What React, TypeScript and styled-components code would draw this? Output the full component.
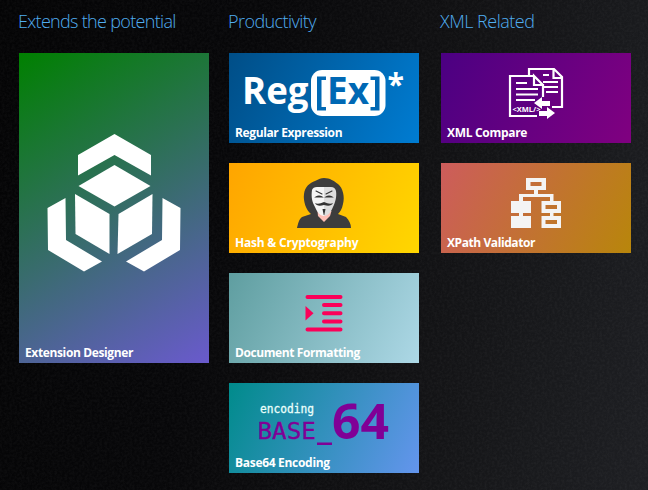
import React from "react";
import styled, { createGlobalStyle } from "styled-components";

const GlobalStyle = createGlobalStyle`
  * { box-sizing: border-box; }
  body { margin: 0; background: #0b0b0c; overflow: hidden; }
`;

const Page = styled.main`
  position: relative;
  isolation: isolate;
  width: 648px;
  height: 490px;
  padding: 8px 0 0 19px;
  overflow: hidden;
  background: linear-gradient(102deg, #050506 0%, #08080a 35%, #111113 60%, #1a1b1e 85%, #1f2024 100%);
  font-family: "Open Sans", "Noto Sans", sans-serif;
`;

const Grain = styled.svg`
  position: absolute;
  inset: 0;
  z-index: -1;
  opacity: 0.024;
`;

const Groups = styled.div`
  display: grid;
  grid-template-columns: 190px 190px 190px;
  column-gap: 20px;
`;

const Group = styled.section<{ $shift?: number }>`
  display: flex;
  flex-direction: column;
  gap: 20px;
  margin-left: ${(p) => p.$shift ?? 0}px;
  margin-right: ${(p) => -(p.$shift ?? 0)}px;
`;

const Heading = styled.h2<{ $tracking: number }>`
  margin: 0 0 0 -1px;
  height: 25px;
  line-height: 27px;
  font-size: 18px;
  font-weight: 300;
  letter-spacing: ${(p) => p.$tracking}px;
  color: #50adf0;
  white-space: nowrap;
`;

const Tile = styled.article<{ $from: string; $to: string; $tall?: boolean }>`
  display: grid;
  grid-template: 1fr / 1fr;
  height: ${(p) => (p.$tall ? 310 : 90)}px;
  background: linear-gradient(
    ${(p) => (p.$tall ? 148.5 : 115.35)}deg,
    ${(p) => p.$from},
    ${(p) => p.$to}
  );
`;

const Art = styled.svg`
  grid-area: 1 / 1;
  display: block;
  width: 100%;
  height: 100%;
`;

const Label = styled.span<{ $tracking: number }>`
  grid-area: 1 / 1;
  align-self: end;
  padding-left: 6px;
  height: 19px;
  line-height: 17px;
  font-size: 12px;
  font-weight: 700;
  letter-spacing: ${(p) => p.$tracking}px;
  color: #fff;
  white-space: nowrap;
`;

const SANS = '"Open Sans", "Noto Sans", sans-serif';
const MONO = '"DejaVu Sans Mono", monospace';

const CubeArt = () => (
  <Art viewBox="0 0 190 310" fill="#fff">
    <path d="M95.500 81 L132 102 V122.500 L95.500 102 L59 122.500 V102Z" />
    <path d="M95.500 112 L131.500 133 L95.500 153.500 L59.500 133Z" />
    <path d="M56 141 L90.500 161 V201 L56.500 181Z" />
    <path d="M133.500 141 L99.500 161 L98.500 201 L133 181Z" />
    <path d="M46.500 145 L47 187 L83 208.500 L65 218.500 L29 197 L28.500 155Z" />
    <path d="M143.500 145 L161.500 155 L161 197 L125 218.500 L107 208.500 L143 187Z" />
  </Art>
);

const RegexArt = () => (
  <Art viewBox="0 0 190 90" fontFamily={SANS} fontWeight="700" fill="#fff">
    <rect x="82" y="17" width="74.500" height="46" rx="11" />
    <text x="13" y="50.500" fontSize="37" textLength="66.500" lengthAdjust="spacingAndGlyphs">Reg</text>
    <g fill="#0068b4">
      <path d="M88 23.500H97V27H92.500V54H97V57.500H88Z" />
      <path d="M150.500 23.500V57.500H141.500V54H146V27H141.500V23.500Z" />
      <text x="98" y="50.500" fontSize="37" textLength="42" lengthAdjust="spacingAndGlyphs">Ex</text>
    </g>
    <text x="158.500" y="41.500" fontSize="31" textLength="16.500" lengthAdjust="spacingAndGlyphs">*</text>
  </Art>
);

const MaskArt = () => (
  <Art viewBox="0 0 190 90">
    <path fill="#3d3d3d" d="M95 15C101 15 105 18 109 21C114 25 116 34 114 41C113 46 111 49 109 51L117 54C120 57 122 61 122 65H68C69 61 70 56 73 54L82 51C77 47 74 38 75 31C76 23 81 20 86 18C90 16 92 15 95 15Z" />
    <path fill="#ffbfb6" d="M88.500 48L89 53L95 59L101 53L102.500 48Z" />
    <path fill="#f5f5f5" d="M83 27Q84 24 88 24H95V53C91 53 88 49 86 44C83 39 82 34 83 27Z" />
    <path fill="#dedede" d="M95 24H102Q106 24 107 28C108 34 106 40 104 44C102 49 99 53 95 53Z" />
    <g fill="none" stroke="#333" strokeWidth="1.100" strokeLinecap="round">
      <path d="M87 28L93 31M103 28L97 31" />
      <path d="M87 34Q90 32 93 34ZM97 34Q100 32 103 34Z" fill="#333" />
    </g>
    <path fill="#333" d="M86 40Q89 42 95 39Q101 42 104 40Q102 44 95 42Q88 44 86 40Z" />
    <path fill="#333" d="M93.500 46H96.500L95.300 52H94.700Z" />
  </Art>
);

const IndentArt = () => (
  <Art viewBox="0 0 190 90">
    <path d="M78.500 24H111.500M95 32H111.500M95 40.200H111.500M95 48.400H111.500M78.500 56.500H111.500" stroke="#fb0059" strokeWidth="4" strokeLinecap="round" />
    <path fill="#fb0059" d="M76.500 33L84.500 40.300L76.500 47.500Z" />
  </Art>
);

const Base64Art = () => (
  <Art viewBox="0 0 190 90" fontFamily={MONO}>
    <text x="31" y="30" fill="#eafffb" stroke="#eafffb" strokeWidth="0.300" fontSize="12" textLength="54" lengthAdjust="spacingAndGlyphs">encoding</text>
    <g fill="#800096">
      <text x="28.500" y="56" fontSize="23" stroke="#800096" strokeWidth="0.300" textLength="58.500" lengthAdjust="spacingAndGlyphs">BASE</text>
      <path d="M88 59.500H103V62H88Z" />
      <text x="103" y="56" fontFamily={SANS} fontSize="48" fontWeight="700" textLength="57" lengthAdjust="spacingAndGlyphs">64</text>
    </g>
  </Art>
);

const XmlArt = () => (
  <Art viewBox="0 0 190 90" fill="none" stroke="#fff" strokeWidth="2.200">
    <path d="M88 23V16H113L121 24V54H111M112.500 16V25H121" />
    <path d="M102 22H108M102 29H117M102 34H117M105 39H117" />
    <path fill="#5d0081" stroke="none" d="M69 23H93L102 32V63H69Z" />
    <path d="M102 44V32H93V23L102 32M93 23H69V63H96" />
    <path d="M75 30H86M75 36H97M75 41.500H97M75 47H94" />
    <path fill="#fff" stroke="none" d="M93 50L101 44V48H109V53H101V56Z" />
    <path fill="#fff" stroke="none" d="M114 60L106 54V58H98V63H106V66Z" />
    <text x="71.500" y="58.500" fill="#fff" stroke="none" fontFamily={SANS} fontSize="7" fontWeight="700" textLength="28" lengthAdjust="spacingAndGlyphs">&lt;XML/&gt;</text>
  </Art>
);

const TreeArt = () => (
  <Art viewBox="0 0 190 90" fill="#f4f4f4">
    <path fillRule="evenodd" d="M85 15H105V27H97V31H112.500V38H120V50H112.500V53H120V65H100.500V53H109V50H100.500V38H109V34H82V38H90V50H82V53H90V65H70V53H78V50H70V38H78V31H93V27H85ZM89.500 19V23H100.500V19ZM104.500 42V46H116V42ZM104.500 57V61H116V57Z" />
  </Art>
);

type TileData = { label: string; tracking: number; from: string; to: string; art: React.FC; tall?: boolean };
type GroupData = { title: string; tracking: number; shift?: number; tiles: TileData[] };

const groups: GroupData[] = [
  {
    title: "Extends the potential",
    tracking: -0.68,
    tiles: [{ label: "Extension Designer", tracking: -0.37, from: "#008000", to: "#6a5acd", art: CubeArt, tall: true }],
  },
  {
    title: "Productivity",
    tracking: -0.57,
    tiles: [
      { label: "Regular Expression", tracking: -0.37, from: "#004e87", to: "#007cd2", art: RegexArt },
      { label: "Hash & Cryptography", tracking: -0.22, from: "#ffa500", to: "#ffd700", art: MaskArt },
      { label: "Document Formatting", tracking: -0.41, from: "#5f9ea0", to: "#add8e6", art: IndentArt },
      { label: "Base64 Encoding", tracking: -0.3, from: "#008b8b", to: "#6495ed", art: Base64Art },
    ],
  },
  {
    title: "XML Related",
    tracking: -0.5,
    shift: 2,
    tiles: [
      { label: "XML Compare", tracking: -0.3, from: "#4b0082", to: "#800080", art: XmlArt },
      { label: "XPath Validator", tracking: -0.42, from: "#cd5c5c", to: "#b8860b", art: TreeArt },
    ],
  },
];

export default function App() {
  return (
    <Page>
      <GlobalStyle />
      <Grain width="648" height="490" aria-hidden="true">
        <filter id="grain" x="0" y="0" width="100%" height="100%" colorInterpolationFilters="sRGB">
          <feTurbulence type="fractalNoise" baseFrequency="0.4" numOctaves="3" seed="4" />
          <feColorMatrix values="2.4 0 0 0 -0.85  2.4 0 0 0 -0.85  2.4 0 0 0 -0.85  0 0 0 0 1" />
        </filter>
        <rect width="648" height="490" filter="url(#grain)" />
      </Grain>
      <Groups>
        {groups.map((g) => (
          <Group key={g.title} $shift={g.shift}>
            <Heading $tracking={g.tracking}>{g.title}</Heading>
            {g.tiles.map(({ art: Drawing, ...t }) => (
              <Tile key={t.label} $from={t.from} $to={t.to} $tall={t.tall}>
                <Drawing />
                <Label $tracking={t.tracking}>{t.label}</Label>
              </Tile>
            ))}
          </Group>
        ))}
      </Groups>
    </Page>
  );
}
